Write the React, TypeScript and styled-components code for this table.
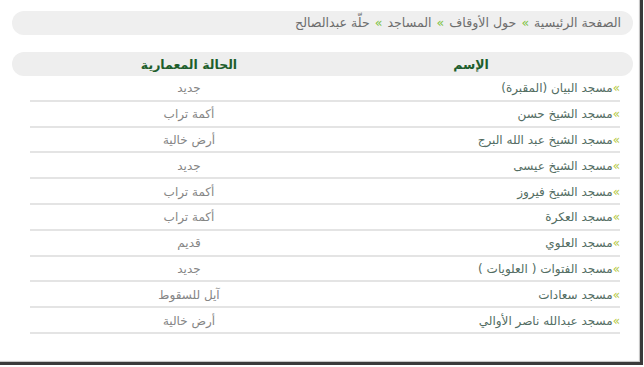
import React from "react";
import styled, { createGlobalStyle } from "styled-components";

const GlobalStyle = createGlobalStyle`
  html, body {
    margin: 0;
    padding: 0;
    background: #ffffff;
    width: 644px;
    height: 367px;
    overflow: hidden;
  }
`;

// picture frame with the dark drop edge on the right and bottom
const Frame = styled.div`
  box-sizing: border-box;
  width: 643px;
  height: 365px;
  border-right: 3px solid #3a3a3a;
  border-bottom: 3px solid #3a3a3a;
  box-shadow: inset -1px -1px 1px rgba(0, 0, 0, 0.25);
  padding: 11px 7px 0 12px;
  direction: rtl;
  font-family: "DejaVu Sans", "Noto Sans", sans-serif;
`;

const Breadcrumb = styled.div`
  height: 24px;
  line-height: 24px;
  background: #efefef;
  border-radius: 12px;
  padding-right: 12px;
  font-size: 12.6px;
  color: #6d6d6d;
  white-space: nowrap;
`;

const Sep = styled.span`
  color: #7cc242;
  margin: 0 5px;
`;

const HeaderBar = styled.div`
  margin-top: 17px;
  height: 24px;
  background: #eeeeee;
  border-radius: 12px;
  display: grid;
  grid-template-columns: 324px 240px;
  align-items: center;
`;

const HeaderCell = styled.div`
  text-align: center;
  font-size: 12.5px;
  font-weight: bold;
  color: #1d5e2c;
`;

const Table = styled.div`
  margin: 0 13px 0 18px;
`;

const Row = styled.div`
  display: grid;
  grid-template-columns: 272px 1fr;
  align-items: center;
  height: 25.8px;
  padding-top: 1px;
  box-sizing: border-box;
  border-bottom: 2px solid #e4e4e4;
  font-size: 12px;
`;

const NameCell = styled.div`
  color: #536d63;
  white-space: nowrap;
`;

const Bullet = styled.span`
  color: #b3c840;
`;

const StatusCell = styled.div`
  text-align: center;
  color: #858585;
`;

const rows: [string, string][] = [
  ["مسجد البيان (المقبرة)", "جديد"],
  ["مسجد الشيخ حسن", "أكمة تراب"],
  ["مسجد الشيخ عبد الله البرج", "أرض خالية"],
  ["مسجد الشيخ عيسى", "جديد"],
  ["مسجد الشيخ فيروز", "أكمة تراب"],
  ["مسجد العكرة", "أكمة تراب"],
  ["مسجد العلوي", "قديم"],
  ["مسجد الفتوات ( العلويات )", "جديد"],
  ["مسجد سعادات", "آيل للسقوط"],
  ["مسجد عبدالله ناصر الأوالي", "أرض خالية"],
];

const App: React.FC = () => (
  <>
    <GlobalStyle />
    <Frame>
      <Breadcrumb>
        الصفحة الرئيسية<Sep>»</Sep>حول الأوقاف<Sep>»</Sep>المساجد<Sep>»</Sep>حلّة عبدالصالح
      </Breadcrumb>
      <HeaderBar>
        <HeaderCell>الإسم</HeaderCell>
        <HeaderCell>الحالة المعمارية</HeaderCell>
      </HeaderBar>
      <Table>
        {rows.map(([name, status]) => (
          <Row key={name}>
            <NameCell>
              <Bullet>»</Bullet>
              {name}
            </NameCell>
            <StatusCell>{status}</StatusCell>
          </Row>
        ))}
      </Table>
    </Frame>
  </>
);

export default App;
